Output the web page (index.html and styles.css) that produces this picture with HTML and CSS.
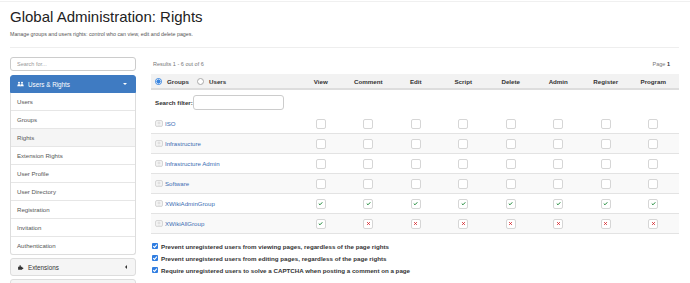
FILE: index.html
```html
<!DOCTYPE html>
<html lang="en">
<head>
  <title>Global Administration: Rights</title>
  <meta charset="UTF-8"/>
  <meta name="viewport" content="width=device-width,initial-scale=1"/>
  <link rel="stylesheet" href="styles.css">
</head>
<body>
<svg class="sprite" aria-hidden="true">
  <symbol id="tick" viewBox="0 0 10 10">
    <path d="M1.5 5.2 L4 7.6 L8.6 2.6" fill="none" stroke="#1f8a3a" stroke-width="2"/>
  </symbol>
  <symbol id="tick-white" viewBox="0 0 10 10">
    <path d="M2 5.2 L4.2 7.4 L8.2 2.8" fill="none" stroke="#fff" stroke-width="1.8"/>
  </symbol>
  <symbol id="cross" viewBox="0 0 10 10">
    <path d="M2.5 2.5 L7.5 7.5 M7.5 2.5 L2.5 7.5" fill="none" stroke="#d6262b" stroke-width="2"/>
  </symbol>
  <symbol id="avatar" viewBox="0 0 8 7">
    <rect x="0.5" y="0.5" width="7" height="6" rx="1.5" fill="#f3f3f3" stroke="#d6d6d6"/>
    <circle cx="4" cy="3" r="1.4" fill="#e0e0e0"/>
    <path d="M1.5 6.5 Q4 4 6.5 6.5 Z" fill="#e0e0e0"/>
  </symbol>
</svg>

<div class="page">
  <div class="page-head">
    <h1>Global Administration: Rights</h1>
    <p class="lead">Manage groups and users rights: control who can view, edit and delete pages.</p>
  </div>

  <div class="layout">
    <aside class="sidebar">
      <input class="side-search" type="text" placeholder="Search for...">

      <div class="panel panel-open">
        <div class="panel-head">
          <svg class="head-icon" viewBox="0 0 14 10">
            <circle cx="4" cy="2.6" r="2" fill="#fff"/>
            <circle cx="10" cy="2.6" r="2" fill="#fff"/>
            <path d="M0.5 9.5 Q0.5 5 4 5 Q7.5 5 7.5 9.5 Z" fill="#fff"/>
            <path d="M6.5 9.5 Q6.5 5 10 5 Q13.5 5 13.5 9.5 Z" fill="#fff"/>
          </svg>
          <span class="head-text">Users &amp; Rights</span>
          <span class="caret-down"></span>
        </div>
        <ul class="panel-list">
          <li>Users</li>
          <li>Groups</li>
          <li class="active">Rights</li>
          <li>Extension Rights</li>
          <li>User Profile</li>
          <li>User Directory</li>
          <li>Registration</li>
          <li>Invitation</li>
          <li>Authentication</li>
        </ul>
      </div>

      <div class="panel">
        <div class="panel-head">
          <svg class="head-icon" viewBox="0 0 10 10">
            <path d="M1 9.5 V4.5 H3.2 Q2.6 2.2 4.4 2.2 Q6.2 2.2 5.6 4.5 H7.8 V6.2 Q9.8 5.6 9.8 7.2 Q9.8 8.8 7.8 8.2 V9.5 Z" fill="#333"/>
          </svg>
          <span class="head-text">Extensions</span>
          <span class="caret-left"></span>
        </div>
      </div>

      <div class="panel">
        <div class="panel-head"></div>
      </div>
    </aside>

    <main class="rights">
      <div class="results">
        <span>Results 1 - 6 out of 6</span>
        <span>Page <b>1</b></span>
      </div>

      <div class="grid thead">
        <div class="mode">
          <span class="radio on"></span>Groups
          <span class="radio"></span>Users
        </div>
        <div class="c">View</div>
        <div class="c">Comment</div>
        <div class="c">Edit</div>
        <div class="c">Script</div>
        <div class="c">Delete</div>
        <div class="c">Admin</div>
        <div class="c">Register</div>
        <div class="c">Program</div>
      </div>

      <div class="filter-row">
        <label>Search filter:</label><input type="text" class="filter-input">
      </div>

      <div class="grid row">
        <div class="name"><svg class="avatar"><use href="#avatar"/></svg>ISO</div>
        <div><span class="box"></span></div><div><span class="box"></span></div><div><span class="box"></span></div><div><span class="box"></span></div>
        <div><span class="box"></span></div><div><span class="box"></span></div><div><span class="box"></span></div><div><span class="box"></span></div>
      </div>
      <div class="grid row">
        <div class="name"><svg class="avatar"><use href="#avatar"/></svg>Infrastructure</div>
        <div><span class="box"></span></div><div><span class="box"></span></div><div><span class="box"></span></div><div><span class="box"></span></div>
        <div><span class="box"></span></div><div><span class="box"></span></div><div><span class="box"></span></div><div><span class="box"></span></div>
      </div>
      <div class="grid row">
        <div class="name"><svg class="avatar"><use href="#avatar"/></svg>Infrastructure Admin</div>
        <div><span class="box"></span></div><div><span class="box"></span></div><div><span class="box"></span></div><div><span class="box"></span></div>
        <div><span class="box"></span></div><div><span class="box"></span></div><div><span class="box"></span></div><div><span class="box"></span></div>
      </div>
      <div class="grid row">
        <div class="name"><svg class="avatar"><use href="#avatar"/></svg>Software</div>
        <div><span class="box"></span></div><div><span class="box"></span></div><div><span class="box"></span></div><div><span class="box"></span></div>
        <div><span class="box"></span></div><div><span class="box"></span></div><div><span class="box"></span></div><div><span class="box"></span></div>
      </div>
      <div class="grid row">
        <div class="name"><svg class="avatar"><use href="#avatar"/></svg>XWikiAdminGroup</div>
        <div><span class="box"><svg><use href="#tick"/></svg></span></div>
        <div><span class="box"><svg><use href="#tick"/></svg></span></div>
        <div><span class="box"><svg><use href="#tick"/></svg></span></div>
        <div><span class="box"><svg><use href="#tick"/></svg></span></div>
        <div><span class="box"><svg><use href="#tick"/></svg></span></div>
        <div><span class="box"><svg><use href="#tick"/></svg></span></div>
        <div><span class="box"><svg><use href="#tick"/></svg></span></div>
        <div><span class="box"><svg><use href="#tick"/></svg></span></div>
      </div>
      <div class="grid row">
        <div class="name"><svg class="avatar"><use href="#avatar"/></svg>XWikiAllGroup</div>
        <div><span class="box"><svg><use href="#tick"/></svg></span></div>
        <div><span class="box"><svg><use href="#cross"/></svg></span></div>
        <div><span class="box"><svg><use href="#cross"/></svg></span></div>
        <div><span class="box"><svg><use href="#cross"/></svg></span></div>
        <div><span class="box"><svg><use href="#cross"/></svg></span></div>
        <div><span class="box"><svg><use href="#cross"/></svg></span></div>
        <div><span class="box"><svg><use href="#cross"/></svg></span></div>
        <div><span class="box"><svg><use href="#cross"/></svg></span></div>
      </div>

      <div class="options">
        <div class="opt"><span class="chk"><svg><use href="#tick-white"/></svg></span>Prevent unregistered users from viewing pages, regardless of the page rights</div>
        <div class="opt"><span class="chk"><svg><use href="#tick-white"/></svg></span>Prevent unregistered users from editing pages, regardless of the page rights</div>
        <div class="opt"><span class="chk"><svg><use href="#tick-white"/></svg></span>Require unregistered users to solve a CAPTCHA when posting a comment on a page</div>
      </div>
    </main>
  </div>
</div>
</body>
</html>
```

FILE: styles.css
```css
body {
  margin: 0;
  font-family: "Liberation Sans", Arial, sans-serif;
  color: #333;
  background: #fff;
}

.sprite {
  position: absolute;
  width: 0;
  height: 0;
}

.page {
  margin-top: 1px;
  border-top: 1px solid #f0f0f0;
  padding: 0 11px 0 10px;
  height: 281px;
  overflow: hidden;
}

h1 {
  font-size: 15px;
  line-height: 17px;
  font-weight: normal;
  margin: 6px 0 0;
  color: #222;
}

.lead {
  font-size: 5.3px;
  line-height: 8px;
  margin: 5px 0 0;
  padding-bottom: 9px;
  border-bottom: 1px solid #eee;
  color: #555;
}

.layout {
  display: flex;
  gap: 15px;
  padding-top: 9px;
}

/* sidebar */

.sidebar {
  width: 126px;
  flex: none;
}

.side-search {
  display: block;
  box-sizing: border-box;
  width: 100%;
  height: 14px;
  margin: 0;
  padding: 0 6px;
  border: 1px solid #ccc;
  border-radius: 3px;
  font: 5.5px "Liberation Sans", Arial, sans-serif;
  color: #555;
}

.side-search::placeholder {
  color: #999;
}

.panel {
  margin-top: 4px;
}

.panel-head {
  display: flex;
  align-items: center;
  gap: 4px;
  box-sizing: border-box;
  height: 18px;
  padding: 0 8px 0 6px;
  background: #f5f5f5;
  border: 1px solid #ddd;
  border-radius: 3px;
  font-size: 6.3px;
  color: #333;
}

.panel-open .panel-head {
  background: #3f7bc2;
  border-color: #3f7bc2;
  border-radius: 3px 3px 0 0;
  color: #fff;
}

.head-icon {
  width: 7px;
  height: 6px;
}

.head-text {
  flex: 1;
}

.caret-down {
  border-left: 2px solid transparent;
  border-right: 2px solid transparent;
  border-top: 2px solid #fff;
}

.caret-left {
  border-top: 2px solid transparent;
  border-bottom: 2px solid transparent;
  border-right: 2px solid #333;
}

.panel-list {
  list-style: none;
  margin: 0;
  padding: 0;
  border: 1px solid #ddd;
  border-top: 0;
  border-radius: 0 0 3px 3px;
}

.panel-list li {
  height: 17px;
  line-height: 17px;
  padding-left: 6px;
  border-bottom: 1px solid #e6e6e6;
  font-size: 6.1px;
  color: #555;
}

.panel-list li:last-child {
  border-bottom: 0;
}

.panel-list li.active {
  background: #f5f5f5;
}

.panel + .panel {
  margin-top: 3px;
}

/* rights table */

.rights {
  flex: 1;
  min-width: 0;
}

.results {
  display: flex;
  justify-content: space-between;
  margin-top: 2px;
  padding: 0 9px 0 2px;
  font-size: 5.5px;
  line-height: 10px;
  color: #777;
}

.results b {
  color: #333;
}

.grid {
  display: grid;
  grid-template-columns: 146px repeat(8, 47.5px);
  align-items: center;
}

.thead {
  margin-top: 5px;
  height: 14px;
  background: #f2f2f2;
  border-bottom: 2px solid #ddd;
  font-size: 6.2px;
  font-weight: bold;
  color: #333;
}

.thead .c {
  text-align: center;
}

.mode {
  display: flex;
  align-items: center;
  padding-left: 4px;
}

.radio {
  width: 5px;
  height: 5px;
  margin-right: 5px;
  border: 1px solid #aaa;
  border-radius: 50%;
  background: #fff;
}

.radio.on {
  border-color: #3a86e0;
  background: radial-gradient(circle, #3a86e0 55%, #fff 60%);
}

.mode .radio:not(.on) {
  margin-left: 8px;
}

.filter-row {
  display: flex;
  align-items: center;
  height: 24px;
  padding-left: 4px;
  font-size: 6.2px;
  font-weight: bold;
  color: #333;
}

.filter-input {
  box-sizing: border-box;
  width: 91px;
  height: 15px;
  margin: 0;
  border: 1px solid #ccc;
  border-radius: 3px;
}

.row {
  height: 19px;
  border-bottom: 1px solid #e3e3e3;
}

.row:nth-of-type(odd) {
  background: #f9f9f9;
}

.name {
  display: flex;
  align-items: center;
  gap: 2px;
  padding-left: 4px;
  font-size: 6.1px;
  color: #3b6db3;
}

.avatar {
  width: 8px;
  height: 7px;
}

.box {
  display: flex;
  align-items: center;
  justify-content: center;
  box-sizing: border-box;
  width: 10px;
  height: 10px;
  margin: 0 auto;
  border: 1px solid #d6d6d6;
  border-radius: 2px;
  background: #fff;
}

.box svg {
  width: 5px;
  height: 5px;
}

.options {
  margin-top: 6px;
}

.opt {
  display: flex;
  align-items: center;
  gap: 3px;
  height: 12px;
  padding-left: 1px;
  font-size: 6.2px;
  font-weight: bold;
  color: #333;
}

.chk {
  display: flex;
  width: 6px;
  height: 6px;
  border-radius: 1px;
  background: #2f7de1;
}

.chk svg {
  width: 6px;
  height: 6px;
}
```
